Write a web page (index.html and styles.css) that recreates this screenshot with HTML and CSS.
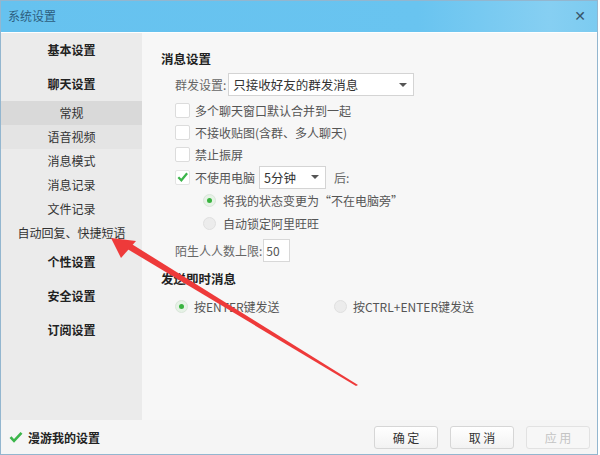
FILE: index.html
```html
<!DOCTYPE html>
<html lang="zh">
<head>
<meta charset="utf-8">
<title>系统设置</title>
<link rel="stylesheet" href="styles.css">
</head>
<body>
<div class="window">
  <div class="titlebar">
    <span class="title">系统设置</span>
    <span class="close">✕</span>
  </div>
  <div class="body">
    <nav class="sidebar">
      <div class="nav-main">基本设置</div>
      <div class="nav-main">聊天设置</div>
      <div class="nav-sub selected">常规</div>
      <div class="nav-sub hover">语音视频</div>
      <div class="nav-sub">消息模式</div>
      <div class="nav-sub">消息记录</div>
      <div class="nav-sub">文件记录</div>
      <div class="nav-sub">自动回复、快捷短语</div>
      <div class="nav-main">个性设置</div>
      <div class="nav-main">安全设置</div>
      <div class="nav-main">订阅设置</div>
    </nav>
    <main class="main">
      <h2 class="heading first">消息设置</h2>
      <div class="row row-select">
        <span class="label">群发设置:</span>
        <div class="select wide"><span>只接收好友的群发消息</span><span class="caret"></span></div>
      </div>
      <div class="row check-row">
        <span class="checkbox"></span><span class="text">多个聊天窗口默认合并到一起</span>
      </div>
      <div class="row check-row">
        <span class="checkbox"></span><span class="text">不接收贴图(含群、多人聊天)</span>
      </div>
      <div class="row check-row">
        <span class="checkbox"></span><span class="text">禁止振屏</span>
      </div>
      <div class="row check-row tall">
        <span class="checkbox checked"><svg viewBox="0 0 14 14" width="14" height="14"><path d="M2.5 7.2 L5.8 10.5 L12 3" fill="none" stroke="#3bb54a" stroke-width="2.4"/></svg></span>
        <span class="text">不使用电脑</span>
        <div class="select short"><span>5分钟</span><span class="caret"></span></div>
        <span class="after">后:</span>
      </div>
      <div class="row radio-row">
        <span class="radio on"></span><span class="text">将我的状态变更为“不在电脑旁”</span>
      </div>
      <div class="row radio-row">
        <span class="radio"></span><span class="text">自动锁定阿里旺旺</span>
      </div>
      <div class="row limit-row">
        <span class="label">陌生人人数上限:</span>
        <div class="input">50</div>
      </div>
      <h2 class="heading second">发送即时消息</h2>
      <div class="row send-row">
        <div class="send-opt first-opt"><span class="radio on"></span><span class="text">按ENTER键发送</span></div>
        <div class="send-opt"><span class="radio"></span><span class="text">按CTRL+ENTER键发送</span></div>
      </div>
    </main>
  </div>
  <footer class="footer">
    <div class="roam">
      <svg viewBox="0 0 14 14" width="14" height="14"><path d="M1.5 7.2 L5 10.8 L12.5 2.8" fill="none" stroke="#3bb54a" stroke-width="2.6"/></svg>
      <span>漫游我的设置</span>
    </div>
    <div class="buttons">
      <button class="btn">确 定</button>
      <button class="btn">取 消</button>
      <button class="btn disabled">应 用</button>
    </div>
  </footer>
  <svg class="arrow" viewBox="0 0 600 455" width="600" height="455">
    <polygon points="124,247 130,243 358,385 356,386" fill="#ee3a3a"/>
    <polygon points="111,238 136,241 121,258" fill="#ee3a3a"/>
  </svg>
</div>
</body>
</html>
```

FILE: styles.css
```css
* { box-sizing: border-box; }
html, body { margin: 0; padding: 0; background: #ffffff; }
body {
  font-family: "Noto Sans CJK SC", "Noto Sans", sans-serif;
  font-size: 12px;
  color: #333;
}
.window {
  position: relative;
  width: 598px;
  height: 455px;
  border: 1px solid #93b6cf;
  display: flex;
  flex-direction: column;
  background: #f7f7f7;
}
.titlebar {
  height: 32px;
  flex: none;
  display: flex;
  align-items: center;
  justify-content: space-between;
  padding: 0 11px 2px 7px;
  background: linear-gradient(to right, #66c2ef 0%, #69c4f0 70%, #86cff2 92%, #7ccbf0 100%);
  border-bottom: 1px solid #ffffff;
}
.title {
  color: #2d5e80;
  font-size: 12px;
}
.close {
  color: #37556b;
  font-weight: bold;
  font-size: 14px;
  font-family: "DejaVu Sans", sans-serif;
}
.body {
  flex: 1;
  display: flex;
  min-height: 0;
}
.sidebar {
  width: 141px;
  flex: none;
  background: #ebebeb;
  display: flex;
  flex-direction: column;
}
.nav-main {
  height: 34px;
  line-height: 34px;
  text-align: center;
  font-weight: bold;
  color: #222;
}
.nav-sub {
  height: 24px;
  line-height: 24px;
  text-align: center;
  color: #333;
}
.nav-sub.selected { background: #d9d9d9; }
.nav-sub.hover { background: #e4e4e4; }
.main {
  flex: 1;
  background: #f7f7f7;
  padding-left: 19px;
  display: flex;
  flex-direction: column;
}
.heading {
  margin: 0;
  font-size: 12.5px;
  font-weight: bold;
  color: #222;
  height: 18px;
  line-height: 18px;
}
.heading.first { margin-top: 17px; }
.heading.second { margin-top: 8px; }
.row {
  display: flex;
  align-items: center;
  padding-left: 14px;
}
.label { color: #666; }
.row-select { height: 23px; margin-top: 5px; }
.select {
  height: 23px;
  background: #ffffff;
  border: 1px solid #d4d4d4;
  display: flex;
  align-items: center;
  justify-content: space-between;
  padding: 0 6px 0 4px;
  color: #333;
  font-size: 12.5px;
}
.select.wide { width: 186px; margin-left: 2px; }
.select.short { width: 67px; margin-left: 4px; }
.caret {
  width: 0;
  height: 0;
  border-left: 4px solid transparent;
  border-right: 4px solid transparent;
  border-top: 4px solid #555;
}
.check-row { height: 22px; }
.row-select + .check-row { margin-top: 3px; }
.check-row.tall { height: 24px; }
.checkbox {
  width: 15px;
  height: 15px;
  background: #ffffff;
  border: 1px solid #dcdcdc;
  border-radius: 2px;
  display: flex;
  align-items: center;
  justify-content: center;
  flex: none;
}
.checkbox.checked { border-color: #e4e4e4; }
.checkbox svg { display: block; }
.text { margin-left: 5px; color: #555; }
.after { margin-left: 8px; color: #666; }
.radio-row { height: 23px; padding-left: 42px; }
.radio {
  width: 13px;
  height: 13px;
  border-radius: 50%;
  background: #ececec;
  border: 1px solid #e0e0e0;
  flex: none;
  position: relative;
}
.radio.on { background: #e6f2e6; border-color: #dae6da; }
.radio.on::after {
  content: "";
  position: absolute;
  left: 3px;
  top: 3px;
  width: 5px;
  height: 5px;
  border-radius: 50%;
  background: #39b33f;
}
.radio-row .text { margin-left: 7px; }
.limit-row { height: 24px; margin-top: 3px; }
.input {
  width: 27px;
  height: 23px;
  background: #ffffff;
  border: 1px solid #d8d8d8;
  margin-left: 1px;
  padding-left: 2px;
  line-height: 21px;
  color: #555;
}
.send-row { height: 22px; margin-top: 7px; padding-left: 14px; }
.send-opt { display: flex; align-items: center; }
.first-opt { width: 159px; }
.send-opt .text { margin-left: 6px; }
.footer {
  height: 34px;
  flex: none;
  display: flex;
  align-items: center;
  justify-content: space-between;
  background: #f5f5f5;
  padding: 0 7px 0 8px;
}
.roam {
  display: flex;
  align-items: center;
  gap: 5px;
  font-weight: bold;
  color: #222;
}
.roam svg { display: block; }
.buttons { display: flex; gap: 12px; }
.btn {
  width: 64px;
  height: 23px;
  border: 1px solid #d6d6d6;
  border-radius: 3px;
  background: linear-gradient(#ffffff, #f2f2f2);
  font-family: "Noto Sans CJK SC", sans-serif;
  font-size: 12px;
  color: #333;
  padding: 0;
}
.btn.disabled { color: #c4c4c4; border-color: #e2e2e2; background: #f7f7f7; }
.arrow {
  position: absolute;
  left: -1px;
  top: -1px;
  pointer-events: none;
}
```
